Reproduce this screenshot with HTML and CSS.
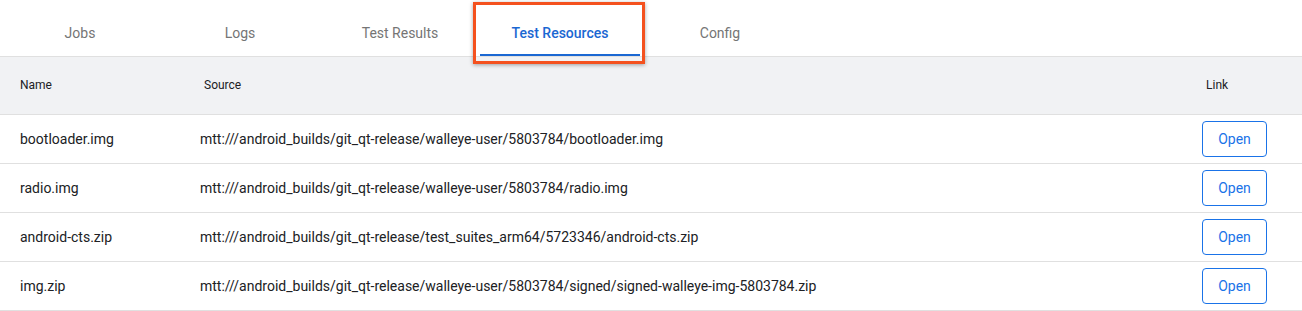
FILE: index.html
```html
<!DOCTYPE html>
<html lang="en">
<head>
  <meta charset="UTF-8">
  <title>Test Resources</title>
  <link rel="stylesheet" href="styles.css">
</head>
<body>

<div class="tabs">
  <div class="tab">Jobs</div>
  <div class="tab">Logs</div>
  <div class="tab">Test Results</div>
  <div class="tab active">Test Resources<span class="highlight"></span></div>
  <div class="tab">Config</div>
</div>

<table class="resources">
  <thead>
    <tr>
      <th class="col-name">Name</th>
      <th class="col-source">Source</th>
      <th class="col-link">Link</th>
    </tr>
  </thead>
  <tbody>
    <tr>
      <td>bootloader.img</td>
      <td class="src">mtt:///android_builds/git_qt-release/walleye-user/5803784/bootloader.img</td>
      <td><button class="open">Open</button></td>
    </tr>
    <tr>
      <td>radio.img</td>
      <td class="src">mtt:///android_builds/git_qt-release/walleye-user/5803784/radio.img</td>
      <td><button class="open">Open</button></td>
    </tr>
    <tr>
      <td>android-cts.zip</td>
      <td class="src">mtt:///android_builds/git_qt-release/test_suites_arm64/5723346/android-cts.zip</td>
      <td><button class="open">Open</button></td>
    </tr>
    <tr>
      <td>img.zip</td>
      <td class="src">mtt:///android_builds/git_qt-release/walleye-user/5803784/signed/signed-walleye-img-5803784.zip</td>
      <td><button class="open">Open</button></td>
    </tr>
  </tbody>
</table>

</body>
</html>
```

FILE: styles.css
```css
body {
  font-family: Roboto, 'Liberation Sans', sans-serif;
  margin: 0;
  padding: 0;
  background-color: #fff;
  color: #202124;
}

.tabs {
  display: flex;
  height: 57px;
  border-bottom: 1px solid #e0e0e0;
  box-sizing: border-box;
}

.tab {
  position: relative;
  width: 160px;
  display: flex;
  align-items: center;
  justify-content: center;
  font-size: 14px;
  color: #757575;
  padding-top: 10px;
  box-sizing: border-box;
}

.tab.active {
  color: #1a67d2;
  font-weight: 500;
}

.tab.active::after {
  content: '';
  position: absolute;
  left: 0;
  right: 0;
  bottom: 0;
  height: 2px;
  background-color: #1a67d2;
}

/* annotation box drawn over the active tab */
.highlight {
  position: absolute;
  left: -7px;
  right: -5px;
  top: 2px;
  height: 62px;
  border: 3px solid #f4511e;
  box-sizing: border-box;
  box-shadow: 0 1px 4px rgba(0, 0, 0, 0.35);
  z-index: 2;
}

.resources {
  width: 100%;
  border-collapse: collapse;
  font-size: 14px;
}

.resources thead tr {
  background-color: #f1f2f4;
  height: 57px;
}

.resources th {
  font-size: 12px;
  font-weight: 400;
  text-align: left;
  color: #202124;
  border-bottom: 1px solid #e0e0e0;
  padding: 0;
}

.col-name {
  width: 164px;
  padding-left: 20px !important;
}

.col-source {
  padding-left: 20px !important;
}

.col-link {
  width: 96px;
  padding-left: 4px !important;
}

.resources td {
  height: 48px;
  padding: 0 0 0 20px;
  border-bottom: 1px solid #e0e0e0;
}

.resources td.src {
  padding-left: 16px;
}

.resources td:last-child {
  padding-left: 0;
}

.open {
  cursor: pointer;
  width: 65px;
  height: 36px;
  background-color: #fff;
  color: #1a73e8;
  border: 1px solid #1a73e8;
  border-radius: 4px;
  font-family: Roboto, 'Liberation Sans', sans-serif;
  font-size: 14px;
  padding: 0;
  margin-left: 0;
}
```
